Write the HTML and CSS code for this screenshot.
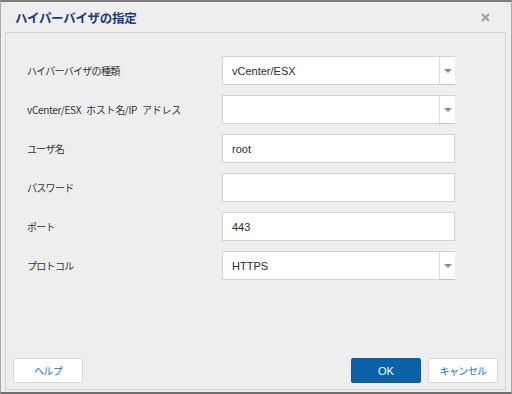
FILE: index.html
```html
<!DOCTYPE html>
<html lang="ja">
<head>
<meta charset="utf-8">
<link rel="stylesheet" href="styles.css">
</head>
<body>
<div class="dialog">
  <div class="titlebar">
    <span class="title">ハイパーバイザの指定</span>
    <svg class="close" width="9" height="9" viewBox="0 0 9 9"><path d="M1 1 L8 8 M8 1 L1 8" stroke="#a0a0a0" stroke-width="2"/></svg>
  </div>
  <div class="panel">
    <div class="form">
      <div class="row">
        <span class="label">ハイパーバイザの種類</span>
        <div class="field select"><span class="value">vCenter/ESX</span><span class="arrow"></span></div>
      </div>
      <div class="row">
        <span class="label wide">vCenter/ESX ホスト名/IP アドレス</span>
        <div class="field select"><span class="value"></span><span class="arrow"></span></div>
      </div>
      <div class="row">
        <span class="label">ユーザ名</span>
        <div class="field"><span class="value">root</span></div>
      </div>
      <div class="row">
        <span class="label">パスワード</span>
        <div class="field"><span class="value"></span></div>
      </div>
      <div class="row">
        <span class="label">ポート</span>
        <div class="field"><span class="value">443</span></div>
      </div>
      <div class="row">
        <span class="label">プロトコル</span>
        <div class="field select"><span class="value">HTTPS</span><span class="arrow"></span></div>
      </div>
    </div>
    <div class="footer">
      <button class="btn">ヘルプ</button>
      <div class="right">
        <button class="btn primary">OK</button>
        <button class="btn">キャンセル</button>
      </div>
    </div>
  </div>
</div>
</body>
</html>
```
FILE: styles.css
```css
html, body {
  margin: 0;
  padding: 0;
  background: #eeeeee;
}
.dialog {
  width: 512px;
  height: 394px;
  box-sizing: border-box;
  border-top: 2px solid #7c7c7c;
  border-left: 1px solid #a8a8a8;
  border-right: 1px solid #a8a8a8;
  border-bottom: 2px solid #6e6e6e;
  background: #eeeeee;
  display: flex;
  flex-direction: column;
}
.titlebar {
  height: 30px;
  display: flex;
  align-items: center;
  justify-content: space-between;
  padding: 0 21px 0 14px;
}
.title {
  font-family: "Noto Sans CJK JP", sans-serif;
  font-weight: bold;
  font-size: 12.5px;
  color: #1e3a7a;
  letter-spacing: -0.3px;
}
.close {
  display: block;
}
.panel {
  flex: 1;
  margin: 0 5px 2px 4px;
  border: 1px solid #d4d4d4;
  border-top-color: #cfcfcf;
  background: #eeeeee;
  display: flex;
  flex-direction: column;
  padding: 23px 0 6px 0;
}
.form {
  display: flex;
  flex-direction: column;
  gap: 10px;
}
.row {
  display: flex;
  align-items: center;
  height: 29px;
}
.label {
  width: 195px;
  padding-left: 21px;
  font-family: "Noto Sans CJK JP", sans-serif;
  font-size: 10px;
  letter-spacing: -0.7px;
  color: #333;
}
.label.wide {
  letter-spacing: -0.3px;
  word-spacing: 3px;
}
.field {
  width: 233px;
  height: 29px;
  box-sizing: border-box;
  border: 1px solid #d2d2d2;
  background: #fff;
  display: flex;
  align-items: center;
}
.value {
  flex: 1;
  padding-left: 9px;
  font-family: "Liberation Sans", sans-serif;
  font-size: 11px;
  color: #2c2c2c;
}
.select {
  border-right: none;
}
.arrow {
  width: 16px;
  height: 28px;
  box-sizing: border-box;
  border-left: 1px solid #dcdcdc;
  border-bottom: 1px solid #a9c9e9;
  margin-top: 1px;
  position: relative;
}
.arrow::after {
  content: "";
  position: absolute;
  left: 4px;
  top: 12px;
  border-left: 4px solid transparent;
  border-right: 4px solid transparent;
  border-top: 4px solid #8a8a8a;
}
.footer {
  margin-top: auto;
  display: flex;
  justify-content: space-between;
  padding: 0 7px 0 7px;
}
.right {
  display: flex;
  gap: 7px;
}
.btn {
  width: 70px;
  height: 25px;
  box-sizing: border-box;
  border: 1px solid #d8d8d8;
  border-radius: 2px;
  background: #fff;
  color: #1a6fc0;
  font-family: "Noto Sans CJK JP", sans-serif;
  font-size: 10px;
  letter-spacing: -0.6px;
  padding: 0;
}
.btn.primary {
  background: #0b62a6;
  border-color: #0b5c9c;
  color: #fff;
  font-family: "Liberation Sans", sans-serif;
  font-size: 11px;
  letter-spacing: 0;
}
```
